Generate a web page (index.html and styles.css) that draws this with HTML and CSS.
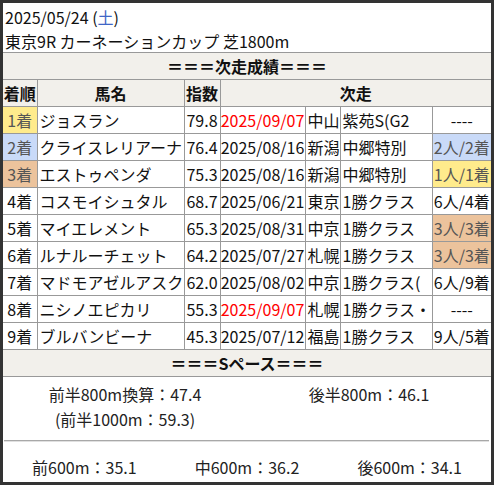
FILE: index.html
```html
<!DOCTYPE html>
<html lang="ja">
<head>
<meta charset="utf-8">
<link rel="stylesheet" href="styles.css">
</head>
<body>
<div class="card">
  <div class="head">
    <div>2025/05/24 (<span class="sat">土</span>)</div>
    <div>東京9R カーネーションカップ 芝1800m</div>
  </div>
  <table class="res">
    <colgroup>
      <col class="c1"><col class="c2"><col class="c3"><col class="c4"><col class="c5"><col class="c6"><col class="c7">
    </colgroup>
    <tr><td class="band" colspan="7">＝＝＝次走成績＝＝＝</td></tr>
    <tr class="th">
      <td class="ctr">着順</td><td class="ctr">馬名</td><td class="ctr">指数</td><td class="ctr" colspan="4">次走</td>
    </tr>
    <tr><td class="ctr hl-y">1着</td><td>ジョスラン</td><td class="ctr">79.8</td><td class="ctr red">2025/09/07</td><td>中山</td><td>紫苑S(G2</td><td class="ctr">----</td></tr>
    <tr><td class="ctr hl-b">2着</td><td>クライスレリアーナ</td><td class="ctr">76.4</td><td class="ctr">2025/08/16</td><td>新潟</td><td>中郷特別</td><td class="ctr hl-b">2人/2着</td></tr>
    <tr><td class="ctr hl-o">3着</td><td>エストゥペンダ</td><td class="ctr">75.3</td><td class="ctr">2025/08/16</td><td>新潟</td><td>中郷特別</td><td class="ctr hl-y">1人/1着</td></tr>
    <tr><td class="ctr">4着</td><td>コスモイシュタル</td><td class="ctr">68.7</td><td class="ctr">2025/06/21</td><td>東京</td><td>1勝クラス</td><td class="ctr">6人/4着</td></tr>
    <tr><td class="ctr">5着</td><td>マイエレメント</td><td class="ctr">65.3</td><td class="ctr">2025/08/31</td><td>中京</td><td>1勝クラス</td><td class="ctr hl-o">3人/3着</td></tr>
    <tr><td class="ctr">6着</td><td>ルナルーチェット</td><td class="ctr">64.2</td><td class="ctr">2025/07/27</td><td>札幌</td><td>1勝クラス</td><td class="ctr hl-o">3人/3着</td></tr>
    <tr><td class="ctr">7着</td><td>マドモアゼルアスク</td><td class="ctr">62.0</td><td class="ctr">2025/08/02</td><td>中京</td><td>1勝クラス(</td><td class="ctr">6人/9着</td></tr>
    <tr><td class="ctr">8着</td><td>ニシノエピカリ</td><td class="ctr">55.3</td><td class="ctr red">2025/09/07</td><td>札幌</td><td>1勝クラス・</td><td class="ctr">----</td></tr>
    <tr><td class="ctr">9着</td><td>ブルバンビーナ</td><td class="ctr">45.3</td><td class="ctr">2025/07/12</td><td>福島</td><td>1勝クラス</td><td class="ctr">9人/5着</td></tr>
    <tr><td class="band" colspan="7">＝＝＝Sペース＝＝＝</td></tr>
  </table>
  <div class="pace">
    <div class="halves">
      <div class="half">
        <div>前半800m換算：47.4</div>
        <div>(前半1000m：59.3)</div>
      </div>
      <div class="half">
        <div>後半800m：46.1</div>
      </div>
    </div>
    <hr class="sep">
    <div class="thirds">
      <div>前600m：35.1</div>
      <div>中600m：36.2</div>
      <div>後600m：34.1</div>
    </div>
  </div>
</div>
</body>
</html>
```

FILE: styles.css
```css
html, body {
  margin: 0;
  padding: 0;
  background: #fff;
}
body {
  font-family: "Noto Sans CJK JP", "Noto Sans", sans-serif;
  font-size: 16px;
  color: #111;
}
.card {
  width: 494px;
  height: 485px;
  box-sizing: border-box;
  border: 3px solid #333;
  overflow: hidden;
}
.head {
  height: 50px;
  box-sizing: border-box;
  padding: 2px 0 0 2px;
  line-height: 24px;
  border-bottom: 1px solid #999;
  white-space: nowrap;
}
.sat {
  color: #3f66c6;
}
.res {
  width: 488px;
  table-layout: fixed;
  border-collapse: collapse;
  border-style: hidden;
}
.c1 { width: 34px; }
.c2 { width: 147px; }
.c3 { width: 36px; }
.c4 { width: 85px; }
.c5 { width: 35px; }
.c6 { width: 92px; }
.c7 { width: 59px; }
.res td {
  border: 1px solid #999;
  height: 26px;
  padding: 0 2px;
  line-height: 26px;
  white-space: nowrap;
  overflow: hidden;
  box-sizing: border-box;
}
.res td.band {
  text-align: center;
  font-weight: bold;
  background: #f2f0eb;
}
.res .th td {
  font-weight: bold;
  background: #f2f0eb;
}
.res td.ctr {
  text-align: center;
  padding: 0;
}
.red { color: #ff0000; }
.hl-y { background: #ffeb8c; color: #555; }
.hl-b { background: #c9daf8; color: #555; }
.hl-o { background: #ecc39c; color: #555; }
.pace {
  border-top: 1px solid #999;
  color: #222;
}
.halves {
  display: grid;
  grid-template-columns: 1fr 1fr;
  padding-top: 5px;
  line-height: 25px;
  height: 58px;
}
.half {
  text-align: center;
}
.sep {
  margin: 0 2px 0 1px;
  border: 0;
  border-top: 1px solid #a8a8a8;
  border-bottom: 1px solid #e0e0e0;
  height: 0;
}
.thirds {
  display: grid;
  grid-template-columns: 1fr 1fr 1fr;
  padding-top: 13px;
  line-height: 25px;
  text-align: center;
}
```
